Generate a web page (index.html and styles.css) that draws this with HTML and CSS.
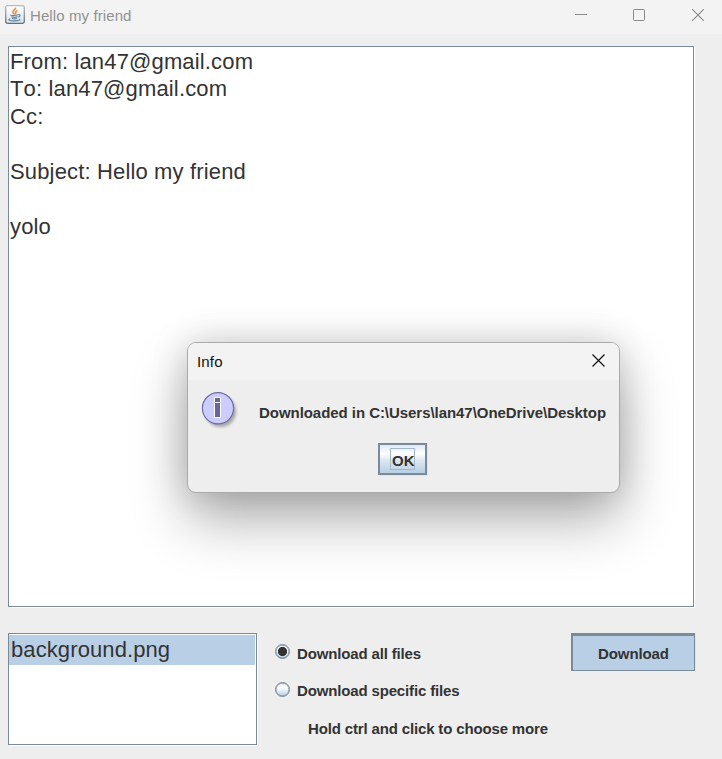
FILE: index.html
```
<!DOCTYPE html>
<html lang="en">
<head>
<meta charset="utf-8">
<title>Hello my friend</title>
<link rel="stylesheet" href="styles.css">
</head>
<body>
<div class="window">
  <header class="titlebar">
    <svg class="app-icon" width="20" height="19" viewBox="0 0 20 19">
      <defs>
        <linearGradient id="tile" x1="0" y1="0" x2="0" y2="1"><stop offset="0" stop-color="#fff"/><stop offset=".55" stop-color="#edf0f2"/><stop offset="1" stop-color="#d5dbe0"/></linearGradient>
        <linearGradient id="edge" x1="0" y1="0" x2="0" y2="1"><stop offset="0" stop-color="#b4bcc2"/><stop offset="1" stop-color="#5b7486"/></linearGradient>
      </defs>
      <rect x=".7" y=".7" width="18.6" height="17.6" rx="1.8" fill="url(#tile)" stroke="url(#edge)" stroke-width="1.3"/>
      <path d="M10.5 2.7C11 5 6.8 5.5 8 7.6C8.4 8.4 9.3 8.8 9.4 9.6M12.3 5.4C9.3 6.4 11.2 7.8 10.5 9.3" fill="none" stroke="#e98a40" stroke-width="1.6"/>
      <path d="M6 9.8C4.7 10.7 12 10.8 13 9.7M13.3 9.6C16 9.1 15.4 12 13 12M6.4 11.6C8 12.4 11 12.3 12.4 11.6M7 13.3C8.5 14.1 10.5 14 12 13.3M5.3 13.8C1.8 15 5.5 15.8 9 15.8C13.5 15.8 16 15 14.3 14" fill="none" stroke="#6389a4" stroke-width="1.2"/>
    </svg>
    <span class="title">Hello my friend</span>
    <div class="controls">
      <svg width="12" height="12" viewBox="0 0 12 12"><path d="M0 5.5H12" stroke="#8c8c8c"/></svg>
      <svg width="12" height="12" viewBox="0 0 12 12"><rect x=".5" y=".5" width="11" height="11" rx="1" fill="none" stroke="#888"/></svg>
      <svg width="12" height="12" viewBox="0 0 12 12"><path d="M.3.3L11.7 11.7M11.7.3L.3 11.7" stroke="#888" stroke-width="1.1"/></svg>
    </div>
  </header>
  <main class="content">
    <div class="message sunken">
      <p>From: lan47@gmail.com</p>
      <p>To: lan47@gmail.com</p>
      <p>Cc:</p>
      <p>&nbsp;</p>
      <p>Subject: Hello my friend</p>
      <p>&nbsp;</p>
      <p>yolo</p>
    </div>
    <div class="bottom">
      <div class="files sunken"><div class="file">background.png</div></div>
      <div class="options">
        <div class="option"><span class="radio checked"></span><span>Download all files</span></div>
        <div class="option"><span class="radio"></span><span>Download specific files</span></div>
        <div class="hint">Hold ctrl and click to choose more</div>
      </div>
      <div class="download">Download</div>
    </div>
  </main>
</div>
<div class="dialog">
  <div class="dialog-title">
    <span>Info</span>
    <svg width="13" height="13" viewBox="0 0 13 13"><path d="M.5.5L12.5 12.5M12.5.5L.5 12.5" stroke="#111" stroke-width="1.15"/></svg>
  </div>
  <div class="dialog-main">
    <svg class="info" width="42" height="42" viewBox="0 0 42 42">
      <defs><filter id="soft" x="-30%" y="-30%" width="160%" height="160%"><feGaussianBlur stdDeviation="1.6"/></filter></defs>
      <circle cx="19.5" cy="20.5" r="15.5" fill="#777" opacity=".6" filter="url(#soft)"/>
      <circle cx="17" cy="17.3" r="15.6" fill="#ccf" stroke="#6c6ca6" stroke-width="1.2"/>
      <path d="M13 6H20V27H13Z" fill="#fff"/>
      <path d="M14 7H19V11H14ZM14 12H19V26H14Z" fill="#669"/>
    </svg>
    <span class="dialog-text">Downloaded in C:\Users\lan47\OneDrive\Desktop</span>
  </div>
  <div class="ok"><span class="focus">OK</span></div>
</div>
</body>
</html>
```
FILE: styles.css
```
* { box-sizing: border-box; }
body { margin: 0; font-family: "Liberation Sans", Arial, sans-serif; font-kerning: none; color: #333; overflow: hidden; }
p { margin: 0; }
svg { display: block; flex: none; }
.window { width: 722px; height: 759px; background: #eee; display: flex; flex-direction: column; }
.titlebar { height: 34px; background: #f3f3f3; display: flex; align-items: flex-start; padding: 5px 18px 0 5px; }
.title { margin-left: 5px; margin-top: 2px; font-size: 15px; line-height: 18px; letter-spacing: .1px; color: #919191; white-space: nowrap; }
.controls { margin-left: auto; margin-top: 4px; display: flex; gap: 46px; }
.controls svg:last-child { margin-left: 1px; }
.content { padding: 12px 27px 0 8px; }
.sunken { background: #fff; border: 1px solid #7a8a99; box-shadow: 1px 1px 0 #fff; }
.message { width: 686px; height: 561px; padding: 1px 0 0 1px; font-size: 22px; line-height: 27.48px; letter-spacing: .15px; }
.bottom { display: flex; margin-top: 26px; align-items: flex-start; }
.files { width: 249px; height: 112px; padding: 1px 1px 0 0; }
.file { height: 30px; background: #b8cfe5; font-size: 22px; letter-spacing: .1px; line-height: 29px; padding-left: 2px; }
.options { margin-left: 18px; font-size: 15px; font-weight: bold; letter-spacing: -.15px; line-height: 18px; white-space: nowrap; }
.option { display: flex; align-items: flex-start; height: 37px; padding-top: 11px; }
.option + .option { height: 38px; padding-top: 12px; }
.option span:last-child { margin-left: 7px; margin-top: 1px; }
.option + .option span:last-child { margin-top: 0; }
.radio { width: 15px; height: 15px; border: 1px solid #7a8a99; border-radius: 50%; background: linear-gradient(#dde8f3, #fff 35%, #b8cfe5); box-shadow: inset 0 0 0 .5px #7a8a99; }
.checked { background: radial-gradient(circle, #333 4.2px, transparent 5px), linear-gradient(#dde8f3, #fff 35%, #b8cfe5); }
.hint { margin-left: 33px; padding-top: 12px; }
.download { width: 124px; height: 38px; margin-left: auto; border: 1px solid #7a8a99; border-width: 3px 1px 1px 2px; background: #b8cfe5; box-shadow: 1px 0 0 #dce6ef; text-align: center; font-weight: bold; font-size: 15px; line-height: 36px; letter-spacing: -.1px; }
.dialog { position: absolute; left: 187px; top: 342px; width: 433px; height: 151px; border: 1px solid #aaa; border-radius: 9px; background: #eee; box-shadow: 0 28px 56px rgba(0,0,0,.3), 0 0 36px rgba(0,0,0,.17); }
.dialog-title { height: 37px; background: #f3f3f3; border-radius: 8px 8px 0 0; display: flex; justify-content: space-between; padding: 11px 14px 0 9px; font-size: 15px; line-height: 15px; letter-spacing: .15px; color: #111; }
.dialog-main { display: flex; height: 63px; padding: 11px 0 0 13px; }
.dialog-text { margin-left: 16px; margin-top: 13px; font-size: 15px; line-height: 18px; font-weight: bold; white-space: nowrap; letter-spacing: -.05px; }
.ok { margin-left: 190px; width: 49px; height: 32px; border: 2px solid #7a8a99; background: linear-gradient(#dde8f3, #fff 30%, #dce7f2 55%, #b8cfe5); box-shadow: 1px 1px 0 #dce6ef; padding: 3px 0 0 10px; }
.focus { display: block; width: 25px; height: 22px; border: 1px solid #a3b8cc; padding-left: 1px; font-size: 15px; line-height: 24px; font-weight: bold; }
```
